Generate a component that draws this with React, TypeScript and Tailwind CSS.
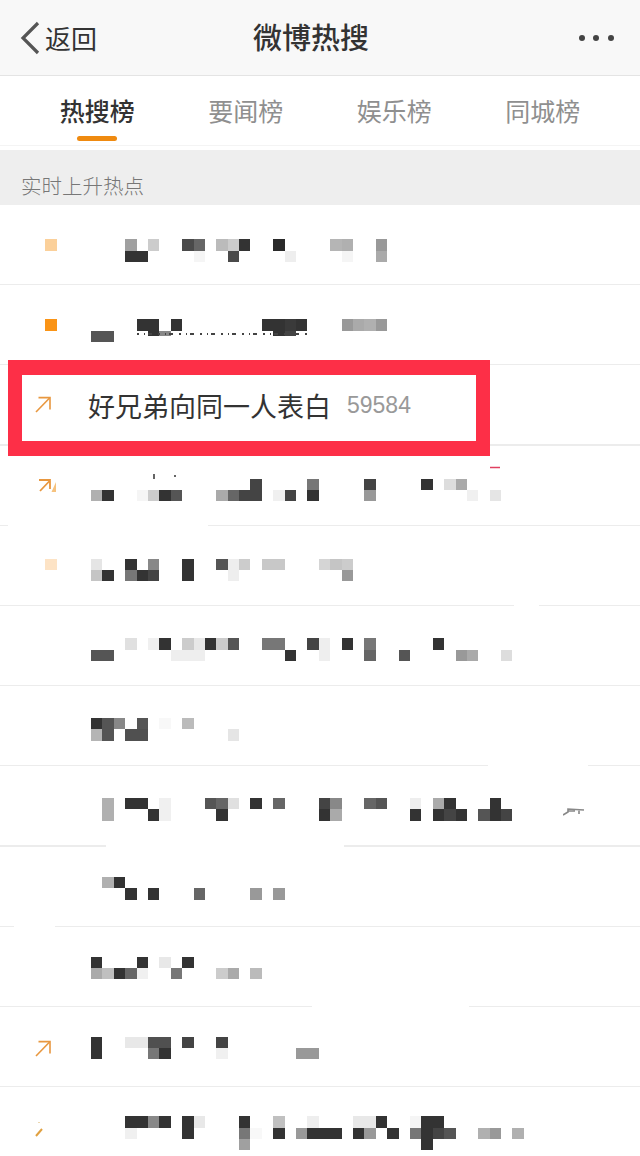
type Cell = [number, string, number?];
type Row = {
  top: number;
  icon?: "light" | "solid" | "pale" | "arrow" | "arrow2" | "frag";
  lines?: Cell[][];
  gap?: [number, number];
  smudge?: boolean;
  bits?: boolean;
  specks?: boolean;
};

const rows: Row[] = [
  {
    top: 34.4,
    icon: "light",
    lines: [
      [[3, "a0"], [5, "cc"], [8, "4a"], [9, "66"], [11, "bb"], [12, "cc"], [13, "33"], [16, "2a"], [21, "b5"], [22, "b0"], [25, "99"]],
      [[3, "33"], [4, "33"], [9, "f5"], [12, "4a"], [17, "ee"], [22, "f5"], [25, "aa"]],
    ],
  },
  {
    top: 34.2,
    icon: "solid",
    bits: true,
    lines: [
      [[4, "33"], [5, "33"], [7, "33"], [15, "33"], [16, "33"], [17, "3a"], [18, "33"], [22, "99"], [23, "aa"], [24, "b0"], [25, "99"]],
      [[0, "55"], [1, "55"], [5, "33", 5], [6, "88", 5], [16, "33", 5], [17, "44", 5]],
    ],
  },
  { top: 0 },
  {
    top: 33,
    icon: "arrow2",
    specks: true,
    lines: [
      [[14, "44"], [19, "77"], [24, "44"], [29, "33"], [31, "dd"], [32, "aa"]],
      [[0, "b0"], [1, "33"], [4, "f5"], [5, "cc"], [6, "33"], [7, "55"], [11, "aa"], [12, "66"], [13, "44"], [14, "44"], [16, "f0"], [17, "44"], [19, "33"], [24, "99"], [33, "f0"], [35, "e5"]],
    ],
    gap: [8, 208],
  },
  {
    top: 33,
    icon: "pale",
    lines: [
      [[0, "e5"], [3, "33"], [5, "88"], [8, "33"], [11, "55"], [12, "ee"], [13, "cc"], [15, "c8"], [16, "c8"], [20, "d5"], [21, "c5"], [22, "cc"]],
      [[0, "c5"], [1, "33"], [3, "77"], [4, "33"], [5, "44"], [8, "33"], [12, "ee"], [22, "99"]],
    ],
    gap: [514, 539],
  },
  {
    top: 32.4,
    lines: [
      [[3, "e0"], [5, "f0"], [6, "33"], [8, "cc"], [9, "e8"], [10, "33"], [11, "cc"], [12, "55"], [15, "77"], [16, "77"], [19, "44"], [20, "ee"], [22, "33"], [24, "77"], [30, "33"]],
      [[0, "55"], [1, "55"], [7, "ee"], [8, "ee"], [9, "ee"], [17, "33"], [20, "ee"], [24, "66"], [27, "55"], [32, "99"], [33, "aa"], [36, "dd"]],
    ],
  },
  {
    top: 32,
    lines: [
      [[0, "33"], [1, "55"], [2, "88"], [4, "55"], [6, "f8"], [8, "bb"]],
      [[0, "b5"], [1, "55"], [3, "50"], [4, "50"], [12, "e5"]],
    ],
    gap: [488, 588],
  },
  {
    top: 31.7,
    smudge: true,
    lines: [
      [[1, "b0"], [3, "33"], [4, "33"], [6, "f0"], [10, "55"], [11, "66"], [12, "e0"], [14, "33"], [16, "66"], [20, "44"], [21, "88"], [24, "66"], [25, "55"], [28, "ee"], [30, "aa"], [31, "33"], [35, "33"]],
      [[1, "b0"], [5, "33"], [6, "f0"], [11, "33"], [20, "33"], [21, "aa"], [28, "33"], [30, "33"], [31, "44"], [32, "33"], [34, "55"], [35, "33"], [36, "44"]],
    ],
    gap: [106, 344],
  },
  {
    top: 30.6,
    lines: [
      [[1, "b0"], [2, "33"]],
      [[3, "33"], [5, "33"], [9, "66"], [14, "99"], [16, "99"]],
    ],
    gap: [14, 55],
  },
  {
    top: 30,
    lines: [
      [[0, "33"], [4, "33"], [6, "e8"], [8, "33"]],
      [[0, "aa"], [1, "c0"], [2, "33"], [3, "66"], [4, "f0"], [7, "77"], [11, "cc"], [12, "aa"], [14, "bb"]],
    ],
    gap: [312, 469],
  },
  {
    top: 29.8,
    icon: "arrow",
    lines: [
      [[0, "33"], [3, "e8"], [4, "e8"], [5, "50"], [6, "50"], [8, "44"], [11, "44"]],
      [[0, "33"], [5, "77"], [6, "33"], [11, "f0"], [18, "99"], [19, "99"]],
    ],
  },
  {
    top: 29.3,
    icon: "frag",
    lines: [
      [[3, "33"], [4, "33"], [5, "88"], [6, "33"], [8, "33"], [9, "e8"], [13, "33"], [16, "c0"], [19, "ee"], [23, "e8"], [24, "e8"], [25, "33"], [28, "f5"], [29, "33"], [30, "33"]],
      [[3, "f0"], [8, "33"], [13, "77"], [14, "f8"], [16, "33"], [18, "99"], [19, "33"], [20, "33"], [21, "33"], [23, "33"], [24, "99"], [26, "33"], [28, "77"], [29, "33"], [30, "44"], [31, "55"], [34, "b0"], [35, "99"], [37, "b0"]],
      [[13, "a0"], [29, "33"]],
    ],
  },
];

function Mosaic({ lines }: { lines: Cell[][] }) {
  return (
    <div className="grid grid-cols-[repeat(40,11.4px)] auto-rows-[11.35px]">
      {lines.flatMap((line, r) =>
        line.map(([c, g, h], i) => (
          <div
            key={`${r}-${i}`}
            style={{
              gridRow: r + 1,
              gridColumn: c + 1,
              backgroundColor: `#${g}${g}${g}`,
              height: h ? `${h}px` : undefined,
            }}
          />
        )),
      )}
    </div>
  );
}

function Arrow({ className }: { className: string }) {
  return (
    <svg viewBox="0 0 16 17" className={className} fill="none" stroke="#e8973f" strokeWidth="1.6">
      <path d="M1 16 L14.6 2" />
      <path d="M3.5 1.6 H15 V13.5" />
    </svg>
  );
}

function Marker({ icon }: { icon?: Row["icon"] }) {
  if (icon === "light") return <div className="ml-[45px] h-[11.4px] w-[11.5px] bg-[#fbd09a]" />;
  if (icon === "solid") return <div className="ml-[45px] h-[11.4px] w-[11.5px] bg-[#fa9416]" />;
  if (icon === "pale") return <div className="ml-[45px] h-[11.4px] w-[11.5px] bg-[#fde3c5]" />;
  if (icon === "arrow") return <Arrow className="ml-[35px] mt-[3px] h-[17px] w-[16px]" />;
  if (icon === "arrow2")
    return (
      <svg viewBox="0 0 20 14" className="ml-[37px] h-[14px] w-[20px]" fill="none">
        <path d="M2 1 H13 V1.5 L3 12 M13 1 V10" stroke="#e8973f" strokeWidth="1.8" />
        <path d="M14.5 13 L19 3 V13 Z" fill="#f6c27e" />
      </svg>
    );
  if (icon === "frag")
    return (
      <svg viewBox="0 0 10 16" className="ml-[35px] mt-[5px] h-[16px] w-[10px]" fill="none">
        <path d="M1 15 L7 8" stroke="#e0a040" strokeWidth="2" />
        <path d="M3.5 1.5 h1" stroke="#d9b060" strokeWidth="1.2" />
      </svg>
    );
  return null;
}

function Divider({ gap }: { gap?: [number, number] }) {
  if (!gap) return <div className="h-[1.2px] bg-[#ececec]" />;
  return (
    <div className="flex h-[1.2px]">
      <div className="bg-[#ececec]" style={{ width: gap[0] }} />
      <div style={{ width: gap[1] - gap[0] }} />
      <div className="flex-1 bg-[#ececec]" />
    </div>
  );
}

export default function App() {
  return (
    <div
      className="h-[1156px] w-[640px] overflow-hidden bg-white text-[#333333]"
      style={{ fontFamily: '"Noto Sans CJK SC", "Noto Sans", sans-serif' }}
    >
      <header className="flex h-[76px] items-center justify-between border-b border-[#e4e4e4] bg-[#f8f8f8] pl-[20px] pr-[26px]">
        <div className="flex w-[140px] items-center">
          <svg viewBox="0 0 20 34" className="h-[34px] w-[20px]" fill="none" stroke="#555555" strokeWidth="3.2">
            <path d="M18 2 L3 17 L18 32" />
          </svg>
          <span className="ml-[5px] text-[26px] leading-none">返回</span>
        </div>
        <h1 className="mb-[2px] text-[29px] leading-none font-medium">微博热搜</h1>
        <div className="flex w-[152px] justify-end gap-[8.5px]">
          <span className="size-[6px] rounded-full bg-[#444444]" />
          <span className="size-[6px] rounded-full bg-[#444444]" />
          <span className="size-[6px] rounded-full bg-[#444444]" />
        </div>
      </header>

      <nav className="grid h-[70px] grid-cols-4 border-b border-[#f4f4f4] px-[23px]">
        <div className="relative flex items-center justify-center pt-[1px] text-[25px] font-medium">
          热搜榜
          <span className="absolute bottom-[4px] left-[54px] h-[5px] w-[40px] rounded-full bg-[#ef8a10]" />
        </div>
        <div className="flex items-center justify-center pt-[1px] text-[25px] text-[#8f8f8f]">要闻榜</div>
        <div className="flex items-center justify-center pt-[1px] text-[25px] text-[#8f8f8f]">娱乐榜</div>
        <div className="flex items-center justify-center pt-[1px] text-[25px] text-[#8f8f8f]">同城榜</div>
      </nav>

      <div className="mt-[4px] flex h-[55px] items-center bg-[#eeeeee] pl-[21px] pt-[15px] text-[20.5px] font-light text-[#777777]">
        实时上升热点
      </div>

      {rows.map((row, i) =>
        i === 2 ? (
          <div key={i} className="relative flex h-[80.2px] flex-col">
            <div className="flex flex-1 items-center pt-[1px]">
              <Arrow className="ml-[35px] mb-[1px] h-[17px] w-[16px]" />
              <span className="ml-[37px] text-[27px] leading-none">好兄弟向同一人表白</span>
              <span
                className="ml-[16px] text-[23px] leading-none text-[#999999]"
                style={{ fontFamily: '"Liberation Sans", sans-serif' }}
              >
                59584
              </span>
            </div>
            <Divider />
            <div className="absolute left-[8px] top-[-5px] h-[96px] w-[482px] border-x-[14.5px] border-y-[15px] border-[#fd2f47]" />
          </div>
        ) : (
          <div key={i} className="flex h-[80.2px] flex-col">
            <div className="relative flex-1">
              <div className="flex" style={{ paddingTop: row.top }}>
                <div className="w-[91px] shrink-0">
                  <Marker icon={row.icon} />
                </div>
                <Mosaic lines={row.lines ?? []} />
              </div>
              {row.bits && (
                <svg viewBox="0 0 170 4" className="absolute left-[137px] top-[47px] h-[4px] w-[170px]" fill="none" stroke="#444444" strokeWidth="2" strokeDasharray="2 5 1 3 4 6">
                  <path d="M0 2 H170" />
                </svg>
              )}
              {row.specks && (
                <svg viewBox="0 0 500 30" className="absolute left-0 top-[20px] h-[30px] w-[500px]" fill="none">
                  <path d="M154 8 V13 M175 9 V11" stroke="#333333" strokeWidth="1.5" />
                  <path d="M490 1.5 H500" stroke="#e04060" strokeWidth="1.5" />
                </svg>
              )}
              {row.smudge && (
                <svg viewBox="0 0 22 8" className="absolute right-[55px] top-[42px] h-[8px] w-[22px]" fill="none">
                  <path d="M0 7 L5 4 V1 L21 2 M16 2 V6 M5 3 H12" stroke="#888888" strokeWidth="1.6" />
                </svg>
              )}
            </div>
            <Divider gap={row.gap} />
          </div>
        ),
      )}
    </div>
  );
}
